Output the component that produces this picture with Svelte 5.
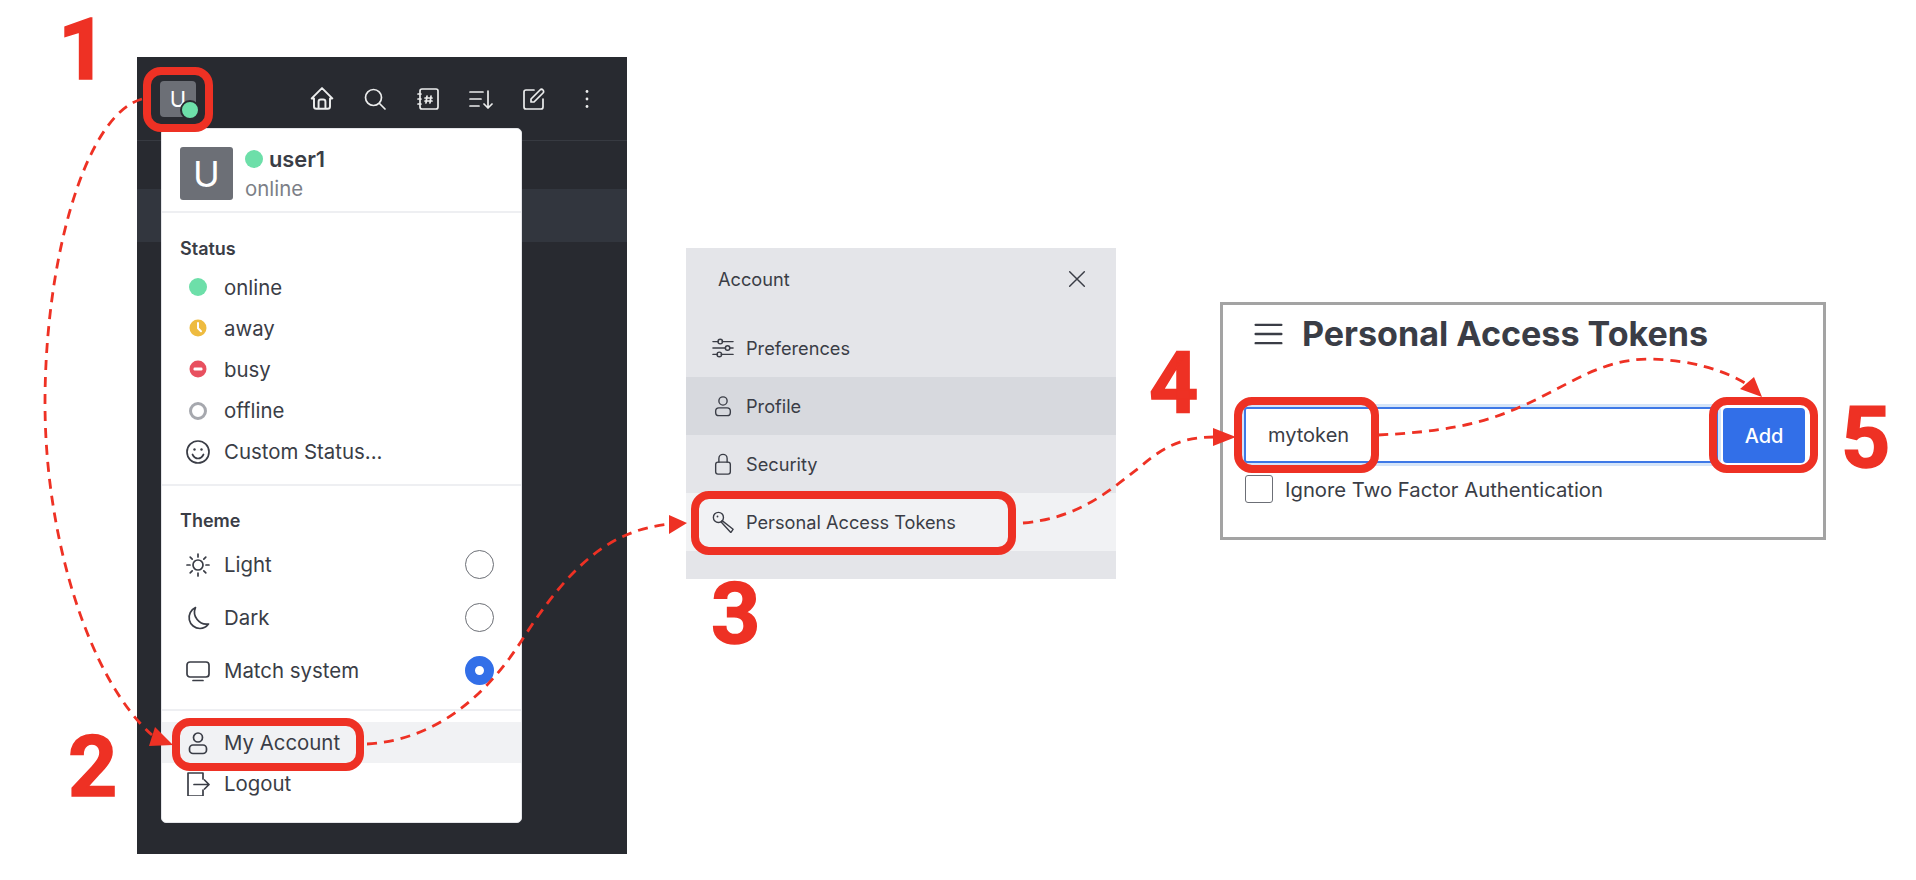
<script lang="ts">
	const statuses = [
		{ id: 'online', label: 'online' },
		{ id: 'away', label: 'away' },
		{ id: 'busy', label: 'busy' },
		{ id: 'offline', label: 'offline' }
	]
	const themes = [
		{ id: 'light', label: 'Light', on: false },
		{ id: 'dark', label: 'Dark', on: false },
		{ id: 'system', label: 'Match system', on: true }
	]
	const accountItems = [
		{ id: 'prefs', label: 'Preferences', state: '' },
		{ id: 'profile', label: 'Profile', state: 'selected' },
		{ id: 'security', label: 'Security', state: '' },
		{ id: 'key', label: 'Personal Access Tokens', state: 'hover' }
	]
	const boxes = [
		[143, 67, 70, 65],
		[172, 718, 192, 53],
		[691, 491, 325, 64],
		[1234, 397, 145, 76],
		[1709, 397, 109, 76]
	]
	const numbers = [
		{ n: 1, left: 58, top: 0 },
		{ n: 2, left: 68, top: 717 },
		{ n: 3, left: 711, top: 564 },
		{ n: 4, left: 1149, top: 333 },
		{ n: 5, left: 1841, top: 388 }
	]
</script>

<!-- MARKUP -------------------------------------------- -->
<div class="page">
	<section class="app">
		<header class="topbar">
			<div class="mini-avatar">U<span class="mini-dot"></span></div>
			<nav class="tools">
				<svg viewBox="1.500 2 21 21"><path d="M5 12H3l9-9 9 9h-2M5 12v7a2 2 0 0 0 2 2h10a2 2 0 0 0 2-2v-7M9 21v-6a2 2 0 0 1 2-2h2a2 2 0 0 1 2 2v6" /></svg>
				<svg viewBox="0 0 24 24"><circle cx="10.5" cy="10.5" r="8" /><path d="M16.5 16.5 22 22" /></svg>
				<svg viewBox="0 0 24 24"><rect x="4" y="2" width="18" height="20" rx="2" /><path d="M2 7h3M2 12h3M2 17h3M11 9l-1 7M15 9l-1 7M9 11h7M9 14h7" /></svg>
				<svg viewBox="0 0 24 24"><path d="M1 5h13M1 12h11M1 19h9M19 4v17M15 17l4 4 4-4" /></svg>
				<svg viewBox="0 0 24 24"><path d="M12 3H4a2 2 0 0 0-2 2v15a2 2 0 0 0 2 2h15a2 2 0 0 0 2-2v-8" /><path d="M9 15v-3L18 3a2 2 0 0 1 3 3l-9 9z" /></svg>
				<svg viewBox="0 0 24 24"><circle class="solid" cx="12" cy="4.5" r="1.4" /><circle class="solid" cx="12" cy="12" r="1.4" /><circle class="solid" cx="12" cy="19.5" r="1.4" /></svg>
			</nav>
		</header>
		<div class="active-row"></div>

		<div class="menu">
			<div class="who">
				<div class="avatar">U</div>
				<div class="who-text">
					<div class="who-name"><span class="dot online"></span><strong>user1</strong></div>
					<div class="who-status">online</div>
				</div>
			</div>

			<div class="group status-group">
				<h4>Status</h4>
				{#each statuses as s}
					<div class="row status">
						<span class="slot">
							<svg class="status-icon" viewBox="0 0 18 18">
								{#if s.id === 'online'}
									<circle cx="9" cy="9" r="9" fill="#6ddfa9" />
								{:else if s.id === 'away'}
									<circle cx="9" cy="9" r="8.500" fill="#eebb3f" />
									<path d="M9 4v5.2l3 3" fill="none" stroke="#fff" stroke-width="2" />
								{:else if s.id === 'busy'}
									<circle cx="9" cy="9" r="8.5" fill="#e8505f" />
									<rect x="4.5" y="7.5" width="9" height="3" rx="1.2" fill="#fff" />
								{:else}
									<circle cx="9" cy="9" r="7.5" fill="none" stroke="#a6a8ae" stroke-width="3" />
								{/if}
							</svg>
						</span>
						<span>{s.label}</span>
					</div>
				{/each}
				<div class="row status">
					<span class="slot">
						<svg class="icon" viewBox="0 0 24 24"><circle cx="12" cy="12" r="11" /><circle class="solid" cx="8.5" cy="9.5" r="1.2" /><circle class="solid" cx="15.5" cy="9.5" r="1.2" /><path d="M6.5 14.5c1.5 3 3.500 4 5.500 4s4-1 5.500-4" /></svg>
					</span>
					<span>Custom Status...</span>
				</div>
			</div>

			<div class="group theme-group">
				<h4>Theme</h4>
				{#each themes as t}
					<div class="row theme">
						<span class="slot">
							<svg class="icon" viewBox="0 0 24 24">
								{#if t.id === 'light'}
									<circle cx="12" cy="12" r="5" /><path d="M12 1v3M12 20v3M1 12h3M20 12h3M4.200 4.200l2 2M17.800 17.800l2 2M4.200 19.800l2-2M17.800 6.200l2-2" />
								{:else if t.id === 'dark'}
									<path d="M9.500 1.500A11 11 0 0 0 14 22.500a11 11 0 0 0 8.500-4.500A12 12 0 0 1 9.500 1.500z" />
								{:else}
									<rect x="1" y="3" width="22" height="15" rx="3" /><path d="M7 21.500h10" />
								{/if}
							</svg>
						</span>
						<span class="grow">{t.label}</span>
						<span class={['radio', t.on && 'on']}></span>
					</div>
				{/each}
			</div>

			<div class="group foot-group">
				<div class="row foot hover">
					<span class="slot">
						<svg class="icon" viewBox="0 0 24 24"><circle cx="12" cy="6.500" r="4.500" /><rect x="3.500" y="14" width="17" height="8.500" rx="3.500" /></svg>
					</span>
					<span>My Account</span>
				</div>
				<div class="row foot">
					<span class="slot">
						<svg class="icon" viewBox="0 0 24 24"><path d="M17 7V1H2v23h15v-6M8 12.500h15M18.500 8l4.500 4.500-4.500 4.500" /></svg>
					</span>
					<span>Logout</span>
				</div>
			</div>
		</div>
	</section>

	<section class="account">
		<div class="account-head">
			<span>Account</span>
			<svg viewBox="0 0 24 24"><path d="M4 4l16 16M20 4 4 20" /></svg>
		</div>
		{#each accountItems as item}
			<div class={['account-item', item.state]}>
				<svg class="icon" viewBox="0 0 24 24">
					{#if item.id === 'prefs'}
						<path d="M1 5h6M11 5h12M1 12h14M19 12h4M1 19h5M10 19h13" /><circle cx="9" cy="5" r="2.500" /><circle cx="17" cy="12" r="2.500" /><circle cx="8" cy="19" r="2.500" />
					{:else if item.id === 'profile'}
						<circle cx="12" cy="6.500" r="4.500" /><rect x="4" y="14" width="16" height="8.500" rx="3.500" />
					{:else if item.id === 'security'}
						<rect x="4" y="10" width="16" height="13" rx="2.500" /><path d="M7.500 10V6a4.500 4.500 0 0 1 9 0v4" />
					{:else}
						<circle cx="7" cy="7" r="5.500" /><circle class="solid" cx="6" cy="6" r="1" /><path d="M11 10.500 23 20l-2.500 3.500L10 12" />
					{/if}
				</svg>
				<span>{item.label}</span>
			</div>
		{/each}
	</section>

	<section class="tokens">
		<div class="tokens-head">
			<svg viewBox="0 0 30 24"><path d="M1 2h28M1 12h28M1 22h28" /></svg>
			<h1>Personal Access Tokens</h1>
		</div>
		<div class="token-form">
			<div class="token-input">mytoken</div>
			<div class="token-add">Add</div>
		</div>
		<div class="token-check">
			<span class="box"></span>
			<span>Ignore Two Factor Authentication</span>
		</div>
	</section>

	<!-- annotations drawn over the screenshots -->
	<svg class="overlay" viewBox="0 0 1916 880">
		<g class="boxes">
			{#each boxes as [x, y, w, h]}
				<rect x={x + 4} y={y + 4} width={w - 8} height={h - 8} rx="14" />
			{/each}
		</g>
		<g class="links">
			<path d="M142 99C85 115 45 260 45 403 45 540 90 680 152 735" />
			<path d="M367 744C440 740 490 690 522 640 570 565 610 530 670 524" />
			<path d="M1023 523C1080 518 1110 490 1140 467 1165 445 1185 437 1214 437" />
			<path d="M1378 435C1440 432 1480 425 1520 407 1570 385 1600 359 1650 359 1690 360 1725 370 1748 385" />
		</g>
		<g class="heads">
			<polygon points="173,745 149,746 155,727" />
			<polygon points="687,523 669,515 669,534" />
			<polygon points="1236,437 1213,428 1213,446" />
			<polygon points="1762,397 1740,389 1754,377" />
		</g>
	</svg>
	{#each numbers as num}
		<span class="step" style:left="{num.left}px" style:top="{num.top}px">{num.n}</span>
	{/each}
</div>

<!-- CSS ----------------------------------------------- -->
<style>
	:global(body) {
		background: #fff;
	}

	.page {
		--ink: #3a3d46;
		position: relative;
		width: 1916px;
		height: 880px;
		padding-left: 137px;
		box-sizing: border-box;
		display: flex;
		align-items: flex-start;
		overflow: hidden;
		background: #fff;
		color: var(--ink);
		font-family: Inter, 'Liberation Sans', sans-serif;
		font-size: 20.400px;
	}

	svg {
		fill: none;
		stroke: currentColor;
		stroke-width: 1.700;
		stroke-linecap: round;
		stroke-linejoin: round;
	}
	svg .solid {
		fill: currentColor;
		stroke: none;
	}

	/* APP PANEL -------------------------------------------- */
	.app {
		position: relative;
		width: 490px;
		height: 797px;
		margin-top: 57px;
		flex: none;
		background: #282a30;
	}
	.topbar {
		height: 84px;
		padding: 24px 0 0 23px;
		box-sizing: border-box;
		display: flex;
		justify-content: space-between;
		border-bottom: 1px solid #373a41;
	}
	.mini-avatar {
		position: relative;
		width: 36px;
		height: 36px;
		display: flex;
		justify-content: center;
		align-items: center;
		background: #6c6f76;
		border-radius: 4px;
		color: #fff;
		font-size: 22px;
	}
	.mini-dot {
		position: absolute;
		right: -4px;
		bottom: -3px;
		width: 16px;
		height: 16px;
		background: #6ddfa9;
		border: 2px solid #282a30;
		border-radius: 50%;
	}
	.tools {
		height: 36px;
		padding-right: 28px;
		display: flex;
		align-items: center;
		gap: 29px;
		color: #eceded;
	}
	.tools svg {
		width: 24px;
		height: 24px;
	}
	.active-row {
		height: 53px;
		margin-top: 48px;
		background: #32363e;
	}

	/* MENU ------------------------------------------------- */
	.menu {
		position: absolute;
		left: 24px;
		top: 71px;
		width: 361px;
		height: 695px;
		box-sizing: border-box;
		background: #fff;
		border: 1px solid #e4e5e9;
		border-radius: 5px;
	}
	.who {
		height: 84px;
		padding: 18px 0 0 18px;
		box-sizing: border-box;
		display: flex;
		gap: 12px;
		border-bottom: 2px solid #eeeff2;
	}
	.avatar {
		width: 53px;
		height: 53px;
		display: flex;
		justify-content: center;
		align-items: center;
		background: #6c6f76;
		border-radius: 3px;
		color: #fff;
		font-size: 36px;
	}
	.who-name {
		height: 24px;
		display: flex;
		align-items: center;
		gap: 6px;
		font-size: 21.800px;
	}
	.who-name strong {
		font-weight: 600;
	}
	.dot {
		width: 18px;
		height: 18px;
		border-radius: 50%;
	}
	.dot.online {
		background: #6ddfa9;
	}
	.who-status {
		margin-top: 5px;
		color: #7c7f87;
	}

	.group {
		box-sizing: border-box;
		border-bottom: 2px solid #eeeff2;
	}
	.group h4 {
		margin: 0;
		padding-left: 18px;
		font-size: 18px;
		font-weight: 600;
		line-height: 24px;
	}
	.status-group {
		height: 273px;
		padding-top: 24px;
	}
	.theme-group {
		height: 225px;
		padding-top: 23px;
	}
	.foot-group {
		padding-top: 11px;
		border-bottom: 0;
	}
	.row {
		display: flex;
		align-items: center;
		padding-left: 18px;
	}
	.slot {
		width: 44px;
		flex: none;
		display: flex;
		justify-content: center;
		padding-right: 9px;
		box-sizing: border-box;
	}
	.status {
		height: 41.200px;
	}
	h4 + .status {
		margin-top: 5.500px;
	}
	.status-icon {
		width: 18px;
		height: 18px;
		stroke: none;
	}
	.row .icon {
		width: 24px;
		height: 24px;
	}
	.theme {
		height: 53px;
		padding-right: 27px;
	}
	h4 + .theme {
		margin-top: 5px;
	}
	.grow {
		flex: 1;
	}
	.radio {
		width: 29px;
		height: 29px;
		box-sizing: border-box;
		background: #fff;
		border: 1.500px solid #6c6f76;
		border-radius: 50%;
	}
	.radio.on {
		background: #fff;
		border: 10.500px solid #326fe8;
	}
	.foot {
		height: 41px;
	}
	.foot.hover {
		background: #f1f2f4;
	}

	/* ACCOUNT PANEL ---------------------------------------- */
	.account {
		width: 430px;
		height: 331px;
		margin: 248px 0 0 59px;
		flex: none;
		background: #e4e5e9;
		font-size: 18.200px;
	}
	.account-head {
		height: 71px;
		padding: 0 28px 9px 32px;
		display: flex;
		justify-content: space-between;
		align-items: center;
		box-sizing: border-box;
	}
	.account-head svg {
		width: 22px;
		height: 22px;
		stroke-width: 1.600;
	}
	.account-item {
		height: 58px;
		padding-left: 26px;
		display: flex;
		align-items: center;
		gap: 12px;
	}
	.account-item .icon {
		width: 22px;
		height: 22px;
		stroke-width: 1.500;
	}
	.account-item.selected {
		background: #d7d9de;
	}
	.account-item.hover {
		background: #f1f2f4;
	}

	/* TOKENS PANEL ----------------------------------------- */
	.tokens {
		width: 606px;
		height: 238px;
		margin: 302px 0 0 104px;
		padding: 1px 19px 0 21px;
		flex: none;
		box-sizing: border-box;
		background: #fff;
		border: 3px solid #a3a3a3;
		font-size: 20px;
	}
	.tokens-head {
		height: 55px;
		padding-left: 10px;
		display: flex;
		align-items: center;
		gap: 19px;
	}
	.tokens-head svg {
		width: 29px;
		height: 22px;
		stroke-width: 2.600;
	}
	.tokens-head h1 {
		margin: 0;
		font-size: 34.100px;
		font-weight: 700;
		line-height: 40px;
	}
	.token-form {
		position: relative;
		height: 56px;
		margin: 46px 86px 0 0;
		display: flex;
		box-sizing: border-box;
		background: #fff;
		border: 2px solid #3e78e6;
		border-radius: 3px;
		box-shadow: 0 0 0 3px #d5e5f9;
	}
	.token-input {
		flex: 1;
		padding-left: 22px;
		display: flex;
		align-items: center;
	}
	.token-add {
		position: absolute;
		left: 477px;
		top: -1px;
		width: 82px;
		height: 55px;
		display: flex;
		justify-content: center;
		align-items: center;
		background: #326fe8;
		border-radius: 4px;
		color: #fff;
		font-weight: 500;
	}
	.token-check {
		margin: 12px 0 0 1px;
		display: flex;
		align-items: center;
		gap: 12px;
		font-size: 20.300px;
	}
	.box {
		width: 28px;
		height: 28px;
		box-sizing: border-box;
		background: #fff;
		border: 1.500px solid #6c6f76;
		border-radius: 3px;
	}

	/* ANNOTATIONS ------------------------------------------ */
	.overlay {
		position: absolute;
		left: 0;
		top: 0;
		width: 1916px;
		height: 880px;
		pointer-events: none;
	}
	.boxes rect {
		fill: none;
		stroke: #ee3124;
		stroke-width: 8;
	}
	.links path {
		stroke: #ee3124;
		stroke-width: 2.800;
		stroke-dasharray: 10 7;
		stroke-linecap: butt;
	}
	.heads polygon {
		fill: #ee3124;
		stroke: none;
	}
	.step {
		position: absolute;
		color: #ee3124;
		font-family: Roboto, 'Liberation Sans', sans-serif;
		font-size: 86px;
		font-weight: 700;
		line-height: 100px;
		-webkit-text-stroke: 1.500px #ee3124;
	}
</style>
